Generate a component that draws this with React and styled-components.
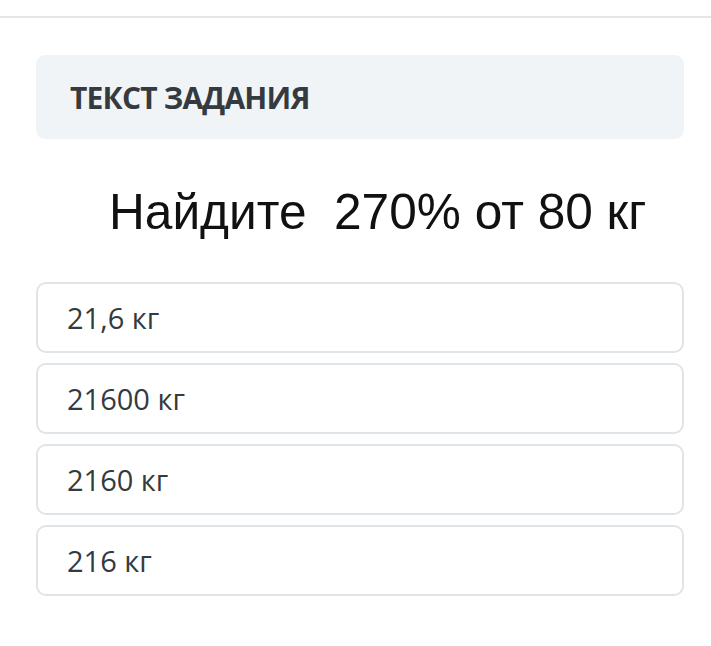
import React from "react";
import styled, { createGlobalStyle } from "styled-components";

const GlobalStyle = createGlobalStyle`
  body {
    margin: 0;
    background: #ffffff;
    font-family: "Open Sans", "Noto Sans", sans-serif;
  }
`;

const options = ["21,6 кг", "21600 кг", "2160 кг", "216 кг"];

function App() {
  return (
    <>
      <GlobalStyle />
      <TopBar />
      <Page>
        <Header>
          <h2>ТЕКСТ ЗАДАНИЯ</h2>
        </Header>
        <TaskText>Найдите&nbsp; 270% от 80 кг</TaskText>
        <Options>
          {options.map((item, index) => (
            <Option key={index}>{item}</Option>
          ))}
        </Options>
      </Page>
    </>
  );
}

const TopBar = styled.div`
  height: 16px;
  border-bottom: 2px solid #e6e6e6;
`;

const Page = styled.div`
  padding: 37px 27px 40px 36px;
`;

const Header = styled.div`
  height: 84px;
  background: #f1f4f6;
  border-radius: 9px;
  display: flex;
  align-items: center;
  padding-left: 34px;

  h2 {
    margin: 0;
    font-family: "Open Sans", sans-serif;
    font-weight: 700;
    font-size: 30px;
    letter-spacing: -0.8px;
    color: #343a40;
  }
`;

const TaskText = styled.div`
  margin: 44px 0 41px 0;
  padding-left: 73px;
  height: 58px;
  line-height: 58px;
  font-family: "Liberation Sans", Arial, sans-serif;
  font-size: 49.6px;
  color: #111111;
`;

const Options = styled.div`
  display: flex;
  flex-direction: column;
  gap: 10px;
`;

const Option = styled.div`
  height: 67px;
  border: 2px solid #e1e4e7;
  border-radius: 10px;
  display: flex;
  align-items: center;
  padding-left: 29px;
  font-family: "Open Sans", sans-serif;
  font-size: 29px;
  color: #333a40;
`;

export default App;
